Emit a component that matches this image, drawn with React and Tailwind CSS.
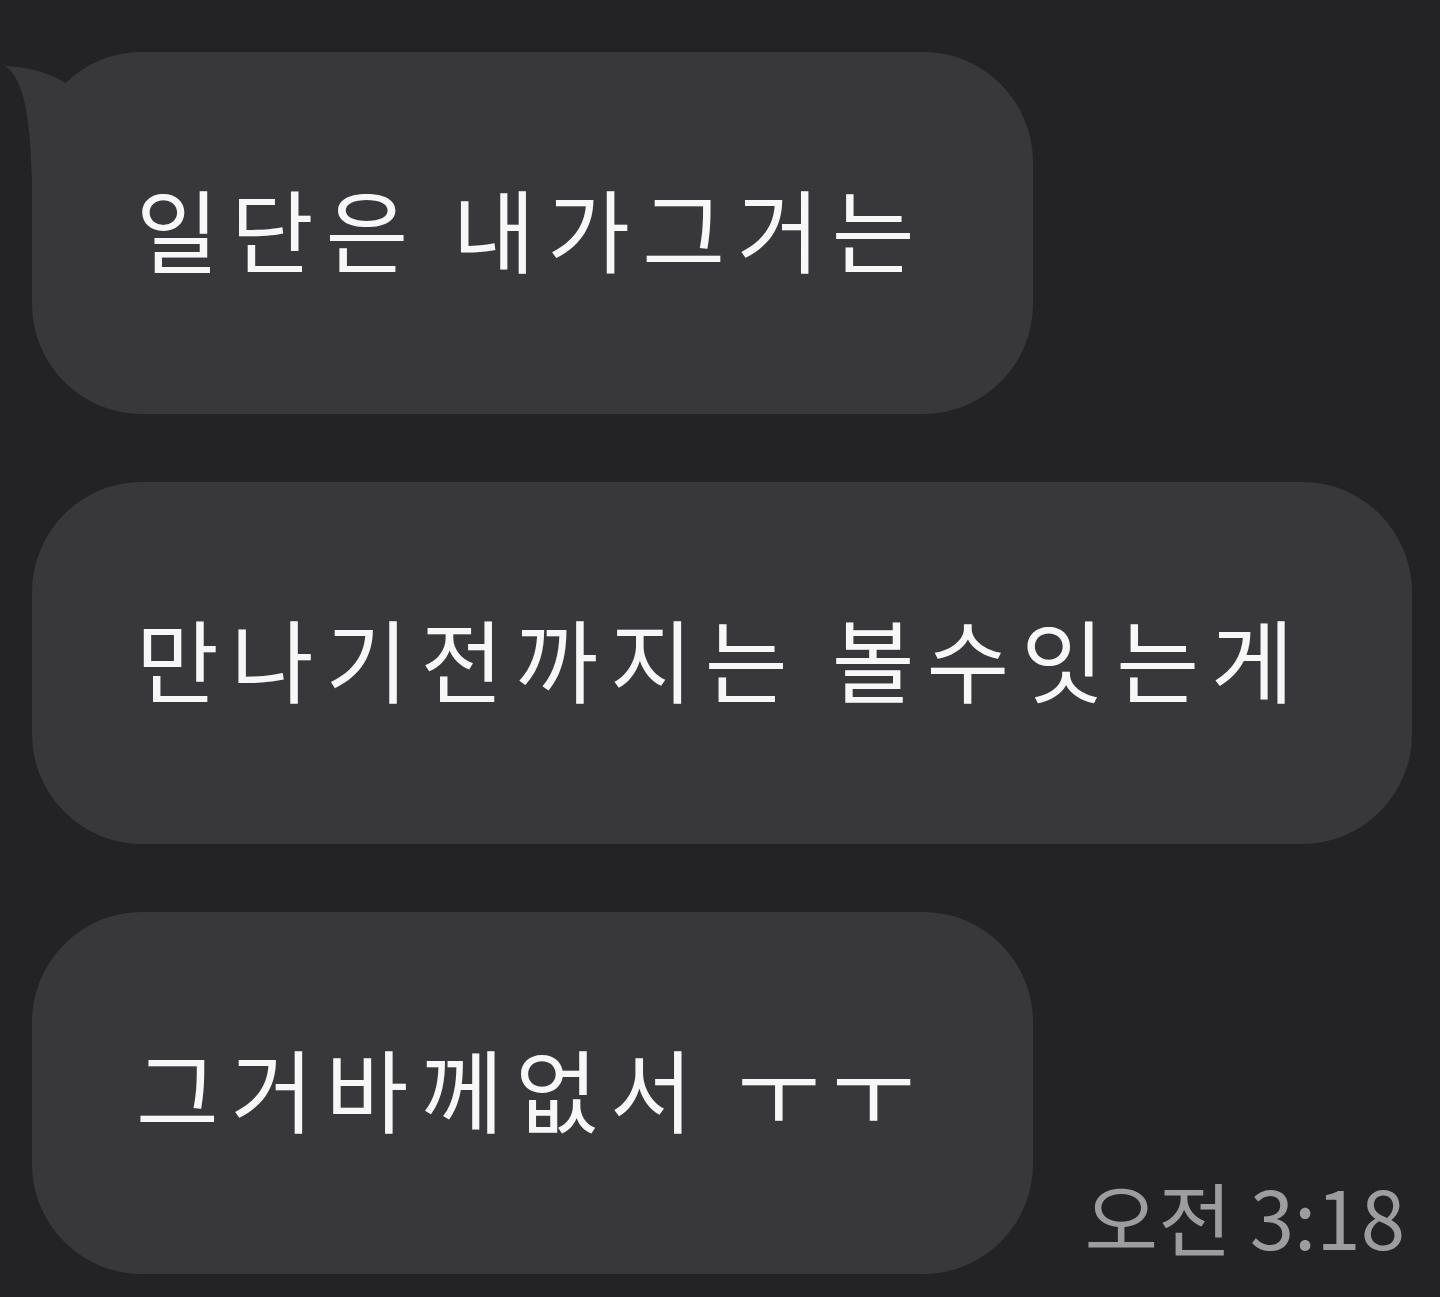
import React from 'react';

const font = { fontFamily: '"Noto Sans CJK KR", "Noto Sans", sans-serif' };

function Tail() {
  // little speech tail on the first bubble of a group
  return (
    <svg
      className="absolute left-[-28px] top-0"
      width="100"
      height="170"
      viewBox="0 0 100 170"
    >
      <path
        d="M1 14 Q41 16 66 34 L96 68 L30 168 L27 108 Q24 28 1 14 Z"
        fill="#38383b"
      />
    </svg>
  );
}

function Bubble({ text, first }) {
  return (
    <div className="relative flex h-[362px] items-center rounded-[110px] bg-[#38383b] pb-[12px] pl-[104px] pr-[106px]">
      {first && <Tail />}
      <span className="whitespace-nowrap text-[90px] leading-none tracking-[12px] text-[#f7f7f7]">{text}</span>
    </div>
  );
}

export default function App() {
  const messages = ['일단은 내가그거는', '만나기전까지는 볼수잇는게', '그거바께없서 ㅜㅜ'];

  return (
    <div className="min-h-screen w-full overflow-hidden bg-[#232326] pt-[52px] pl-[32px]" style={font}>
      <div className="flex flex-col items-start gap-[68px]">
        {messages.map((m, i) => (
          <div key={i} className="flex items-end gap-[52px]">
            <Bubble text={m} first={i === 0} />
            {i === messages.length - 1 && (
              <span className="mb-[19px] whitespace-nowrap text-[80px] leading-none text-[#9d9d9f]">오전 3:18</span>
            )}
          </div>
        ))}
      </div>
    </div>
  );
}
